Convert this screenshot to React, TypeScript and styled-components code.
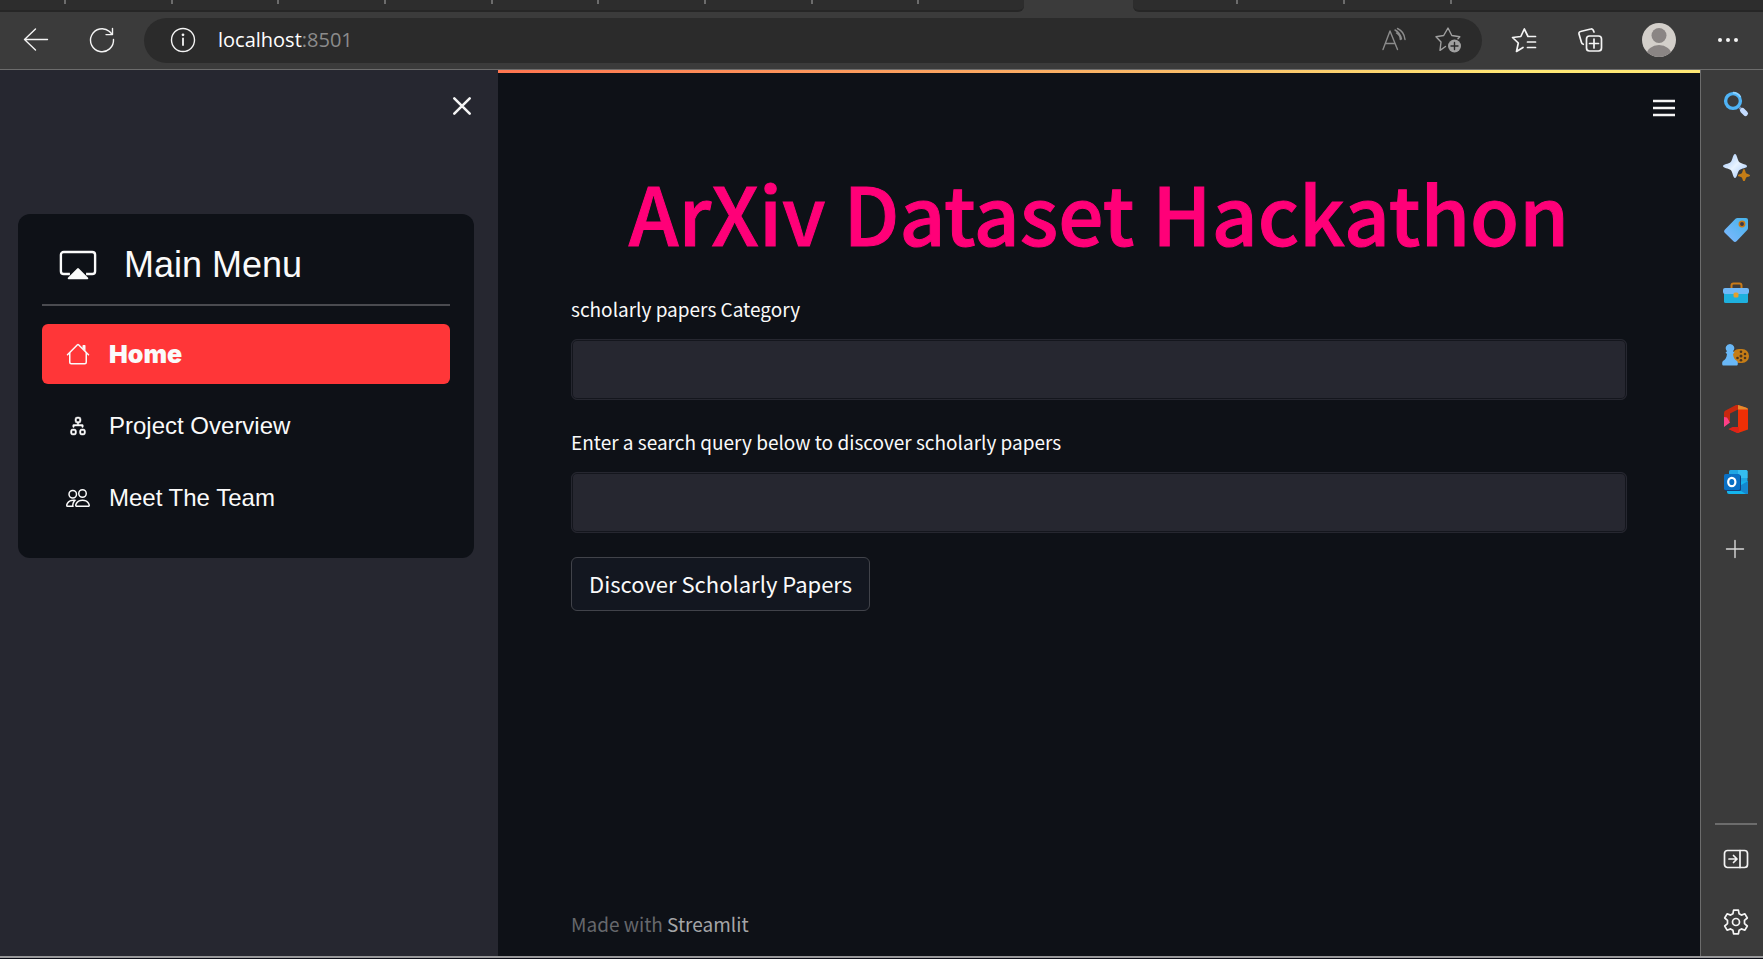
import React from "react";
import styled, { createGlobalStyle } from "styled-components";
import { BsDiagram2, BsPeople } from "react-icons/bs";

const source = `"Source Sans Pro", "Noto Sans CJK SC", sans-serif`;

const Global = createGlobalStyle`
  *, *::before, *::after { box-sizing: border-box; }
  body { margin: 0; background: #0e1117; color: #fafafa; font-family: ${source}; }
  button { font: inherit; color: inherit; border: 0; background: none; padding: 0; cursor: pointer; }
  svg { display: block; flex: none; }
`;

const Browser = styled.div`
  display: flex;
  flex-direction: column;
  min-height: 100vh;
  border-bottom: 1px solid #0a0c16;
`;

const TabStrip = styled.div`
  display: flex;
  height: 12px;
  background: #3b3b3b;
`;

const TabRun = styled.div<{ $grow: number; $side: "left" | "right" }>`
  flex: ${(p) => p.$grow} 1 0;
  display: flex;
  background: #2d2d2d;
  border-bottom: 2px solid #262626;
  border-bottom-${(p) => (p.$side === "left" ? "right" : "left")}-radius: 6px;
`;

const Tab = styled.div<{ $grow?: number; $last?: boolean }>`
  flex: ${(p) => p.$grow ?? 106} 1 0;
  height: 4px;
  border-right: ${(p) => (p.$last ? "0" : "2px solid #6c6c6c")};
`;

const ActiveTab = styled.div`
  flex: 109 1 0;
`;

const Toolbar = styled.header`
  display: flex;
  align-items: center;
  height: 58px;
  padding: 0 21px 1px 22px;
  gap: 28px;
  background: #3b3b3b;
  border-bottom: 1px solid #6c6c6c;
`;

const ToolGroup = styled.div`
  display: flex;
  align-items: center;
  gap: 38px;
`;

const ToolButton = styled.button`
  display: block;
`;

const AddressBar = styled.div`
  flex: 1;
  display: flex;
  align-items: center;
  height: 45px;
  padding: 0 19px 0 25px;
  gap: 21px;
  border-radius: 24px;
  background: #2b2b2b;
`;

const AddressActions = styled.div`
  display: flex;
  gap: 26px;
`;

const Url = styled.a`
  flex: 1;
  font-family: "Segoe UI", "Open Sans", sans-serif;
  font-size: 20px;
  line-height: 28px;
  color: #ffffff;
  text-decoration: none;
`;

const Port = styled.span`
  color: #8b8b8b;
`;

const Body = styled.div`
  flex: 1;
  display: flex;
  border-bottom: 2px solid #98989a;
`;

const Sidebar = styled.aside`
  flex: 0 0 498px;
  background: #262730;
  display: flex;
  flex-direction: column;
  padding: 24px 24px 24px 18px;
`;

const CloseButton = styled.button`
  align-self: flex-end;
`;

const Menu = styled.nav`
  margin-top: 96px;
  padding: 24px 24px 30px;
  border-radius: 12px;
  background: #0e1117;
  font-family: "Liberation Sans", Arial, sans-serif;
`;

const MenuTitle = styled.div`
  display: flex;
  align-items: center;
  gap: 27px;
  padding: 0 17px;
  height: 54px;
  font-size: 36px;
`;

const Rule = styled.hr`
  margin: 12px 0 18px;
  border: 0;
  height: 2px;
  background: #4a4b50;
`;

const MenuList = styled.ul`
  list-style: none;
  margin: 0;
  padding: 0;
  display: flex;
  flex-direction: column;
  gap: 12px;
`;

const MenuLink = styled.a<{ $active?: boolean }>`
  display: flex;
  align-items: center;
  gap: 19px;
  height: 60px;
  padding: 0 24px;
  border-radius: 6px;
  font-size: ${(p) => (p.$active ? 25 : 24)}px;
  font-family: ${(p) => (p.$active ? `"Arial Black", Inter, sans-serif` : "inherit")};
  font-weight: ${(p) => (p.$active ? 900 : 400)};
  color: #fafafa;
  background: ${(p) => (p.$active ? "#ff3638" : "transparent")};
  text-decoration: none;
`;

const Content = styled.main`
  flex: 1;
  display: flex;
  flex-direction: column;
  background: #0e1117;
`;

const Decoration = styled.div`
  height: 3px;
  background: linear-gradient(90deg, #ff7550, #f9c06a 60%, #ffe875 85%);
`;

const PageHeader = styled.div`
  display: flex;
  justify-content: flex-end;
  padding: 21px 22px 0;
`;

const Page = styled.div`
  flex: 1;
  display: flex;
  flex-direction: column;
  padding: 41px 73px 17px;
`;

const Title = styled.h1`
  margin: 0 0 36px;
  text-align: center;
  font-size: 80px;
  line-height: 96px;
  font-weight: 500;
  color: #ff0078;
  -webkit-text-stroke: 1px #ff0078;
`;

const Label = styled.label`
  font-size: 19px;
  line-height: 28px;
  margin-bottom: 16px;
`;

const Field = styled.input`
  width: 100%;
  height: 61px;
  margin-bottom: 28px;
  padding: 12px 16px;
  font: 22px/28px ${source};
  color: #fafafa;
  background: #262730;
  border: 1px solid #262730;
  border-radius: 6px;
  box-shadow: inset 0 0 0 1px #14161d;
  outline: 0;
`;

const SubmitButton = styled.button`
  align-self: flex-start;
  height: 54px;
  margin-top: -4px;
  padding: 0 17px 2px;
  font-size: 22px;
  border: 1px solid #41434a;
  border-radius: 6px;
  background: #131720;
`;

const Footer = styled.footer`
  margin-top: auto;
  font-size: 19px;
  line-height: 30px;
  color: #66686c;
`;

const FooterLink = styled.a`
  color: #a4a5a7;
  text-decoration: none;
`;

const EdgeBar = styled.aside`
  flex: 0 0 63px;
  display: flex;
  flex-direction: column;
  align-items: center;
  gap: 35px;
  padding: 20px 0 20px 8px;
  background: #3b3b3b;
  border-left: 1px solid #6c6c6c;
`;

const EdgeButton = styled.button`
  width: 28px;
  height: 28px;
`;

const EdgeDivider = styled.div`
  width: 42px;
  height: 2px;
  margin: auto 0 -15px;
  background: #6c6c6c;
`;

type LineProps = { size?: number; children: React.ReactNode; color?: string; w?: number };

const Line = ({ size = 28, children, color = "#f4f4f4", w = 1.4 }: LineProps) => (
  <svg width={size} height={size} viewBox="0 0 28 28" fill="none" stroke={color} strokeWidth={w} strokeLinecap="round" strokeLinejoin="round" aria-hidden="true">
    {children}
  </svg>
);

const AirplayIcon = () => (
  <svg width="38" height="38" viewBox="0 0 16 16" fill="none" aria-hidden="true">
    <path d="M4.600 11.800H2a1.200 1.200 0 0 1-1.200-1.200V3.700A1.200 1.200 0 0 1 2 2.500h12a1.200 1.200 0 0 1 1.200 1.200v6.900a1.200 1.200 0 0 1-1.200 1.200h-2.600" stroke="currentColor" strokeWidth="1" />
    <path d="M7.650 9.450a.5.5 0 0 1 .7 0l3.900 3.900a.35.350 0 0 1-.25.6H4a.35.350 0 0 1-.25-.6z" fill="currentColor" />
  </svg>
);

const HouseIcon = () => (
  <svg width="24" height="24" viewBox="0 0 16 16" fill="currentColor" aria-hidden="true">
    <path fillRule="evenodd" d="M2 13.500V7h1v6.500a.5.500 0 0 0 .5.500h9a.5.500 0 0 0 .5-.5V7h1v6.500a1.500 1.500 0 0 1-1.500 1.500h-9A1.500 1.500 0 0 1 2 13.500zm11-11V6l-2-2V2.500a.5.500 0 0 1 .5-.5h1a.5.500 0 0 1 .5.500z" />
    <path fillRule="evenodd" d="M7.293 1.500a1 1 0 0 1 1.414 0l6.647 6.646a.5.500 0 0 1-.708.708L8 2.207 1.354 8.854a.5.500 0 1 1-.708-.708L7.293 1.500z" />
  </svg>
);

const edgeItems = [
  {
    label: "Search",
    art: (
      <>
        <path d="M17.500 17.500l3 3" stroke="#7c8fb0" strokeWidth="2.500" />
        <path d="M20.500 20.500l3 3" stroke="#c4dcff" strokeWidth="5" strokeLinecap="round" />
        <circle cx="11" cy="11" r="7.400" fill="none" stroke="#4fb3f5" strokeWidth="3.400" />
        <path d="M11 2.600a8.400 8.400 0 0 1 7.500 4.600" fill="none" stroke="#8fd2ff" strokeWidth="1.600" />
      </>
    ),
  },
  {
    label: "Discover",
    art: (
      <>
        <path d="M13 1C15 1 15.500 7.500 17.500 9.300C19.500 11 25 11.300 25 13.300C25 15.300 19.500 15.300 17.500 17C15.500 18.800 15 25 13 25C11 25 10.700 18.800 8.700 17C6.700 15.300 1 15.300 1 13C1 11.300 6.700 11 8.700 9C10.500 7.200 11 1 13 1Z" fill="url(#spark)" />
        <path d="M22 16c1.200 0 1.400 3.500 2.200 4.300s3.800 1 3.800 2.200-3 1.200-3.800 2-1 4-2.200 4-1.400-3.200-2.200-4-3.800-.8-3.800-2 3-1.400 3.800-2.200 1-4.300 2.200-4.300z" fill="#c67d16" />
      </>
    ),
  },
  {
    label: "Shopping",
    art: (
      <>
        <path d="M15.500 2H24a2 2 0 0 1 2 2v8a3 3 0 0 1-1 2.300L14.800 25a2.500 2.500 0 0 1-3.600 0L3 17a2.500 2.500 0 0 1 0-3.600L13.500 2.800a3 3 0 0 1 2-.8z" fill="url(#tag)" />
        <circle cx="20" cy="8" r="2.700" fill="#3a3a48" stroke="#c87a18" strokeWidth="1.500" />
      </>
    ),
  },
  {
    label: "Tools",
    art: (
      <>
        <path d="M9.500 9V6.500a2 2 0 0 1 2-2h6a2 2 0 0 1 2 2V9" fill="none" stroke="#c87a18" strokeWidth="2" />
        <rect x="2" y="13" width="24" height="11" rx="1.500" fill="#1eb0de" />
        <path d="M3 9h22a2 2 0 0 1 2 2v2a2 2 0 0 1-2 2H3a2 2 0 0 1-2-2v-2a2 2 0 0 1 2-2z" fill="#6fb8f8" />
        <rect x="11.500" y="13.500" width="5" height="5" rx="1.500" fill="#e3a02f" />
      </>
    ),
  },
  {
    label: "Games",
    art: (
      <>
        <rect x="10" y="7" width="17" height="14" rx="7" fill="#c67d16" />
        <circle cx="19" cy="14" r="1.500" fill="#4a3520" />
        <circle cx="19" cy="9.800" r="1.300" fill="#4a3520" />
        <circle cx="19" cy="18.200" r="1.300" fill="#4a3520" />
        <circle cx="23" cy="12" r="1.300" fill="#4a3520" />
        <circle cx="23" cy="16" r="1.300" fill="#4a3520" />
        <circle cx="15.500" cy="16" r="1.300" fill="#4a3520" />
        <path d="M8 2a4.200 4.200 0 0 1 3 7.200l1.500 1.300-1.500 1.500c.3 3.500 1.500 5.500 4 7 1.200 1 1 4.500 0 4.500H1c-1 0-1.200-3.500 0-4.500 2.500-1.500 3.700-3.500 4-7L3.500 10.500 5 9.200A4.200 4.200 0 0 1 8 2z" fill="#69b7f6" />
      </>
    ),
  },
  {
    label: "Office",
    art: (
      <>
        <path d="M16 0l10 3.500v21L16 28 6.500 24 16 24.500z" fill="#ee2f06" />
        <path d="M14 0l3 0v4L8 8.500v7.500l-6 4V8a3 3 0 0 1 2-2.800z" fill="#c9280e" />
        <path d="M2 12l3 .5 3 5L2 22z" fill="#ff3f86" />
        <path d="M16 0l8 2.600a3 3 0 0 1 2 2H16z" fill="#e58a2c" />
        <path d="M6.500 24l4-2H17v6h-2z" fill="#de2318" />
      </>
    ),
  },
  {
    label: "Outlook",
    art: (
      <>
        <rect x="7" y="2" width="18.500" height="16" rx="1.500" fill="#1fa6e4" />
        <path d="M16 2h8a1.500 1.500 0 0 1 1.500 1.500V10H16z" fill="#35bdf0" />
        <path d="M5 15l21-2v11a2 2 0 0 1-2 2H7a2 2 0 0 1-2-2z" fill="#14b5ee" />
        <path d="M26 13L14 20l10 6h2z" fill="#1487cf" />
        <rect x="3" y="7" width="16" height="16" rx="1.500" fill="#14407c" />
        <rect x="2" y="6" width="16" height="16" rx="1.500" fill="#0a70c4" />
        <ellipse cx="9.800" cy="14" rx="3.600" ry="4.200" fill="none" stroke="#fff" strokeWidth="2.200" />
      </>
    ),
  },
];

export default function App() {
  return (
    <Browser>
      <Global />
      <TabStrip>
        <TabRun $grow={1024} $side="left">
          <Tab $grow={65} />
          {Array.from({ length: 8 }, (_, i) => <Tab key={i} />)}
          <Tab $last />
        </TabRun>
        <ActiveTab />
        <TabRun $grow={630} $side="right">
          <Tab $grow={104} /><Tab /><Tab /><Tab $grow={314} $last />
        </TabRun>
      </TabStrip>
      <Toolbar>
        <ToolGroup>
          <ToolButton aria-label="Back">
            <Line><path d="M25.500 13.500H2.500M13.500 3L2.500 13.500l11 10.500" /></Line>
          </ToolButton>
          <ToolButton aria-label="Refresh">
            <Line><path d="M25.500 13.500A11.500 11.500 0 1 1 21.500 5.500l2.800 3M24.500 2.500V8.600h-6.500" /></Line>
          </ToolButton>
        </ToolGroup>
        <AddressBar>
          <Line>
            <circle cx="14" cy="14" r="11.500" />
            <path d="M14 12.500v6.500" strokeWidth="1.800" />
            <circle cx="14" cy="8.800" r=".7" />
          </Line>
          <Url href="http://localhost:8501">localhost<Port>:8501</Port></Url>
          <AddressActions>
            <ToolButton aria-label="Read aloud">
              <Line color="#8c8c8c">
                <path d="M2 23.500L9 5l7.500 18.500M4.500 17.500h9.500M15.500 7c2.500 1.500 3.800 4 3.800 6.500M14 4c4 2 5.500 5 6.500 9" />
                <path d="M16.500 2.500c4.500 2 7 6 7.500 11" />
              </Line>
            </ToolButton>
            <ToolButton aria-label="Add to favorites">
              <Line color="#a0a0a0">
                <path d="M10.500 20.500l-5.500 3.800 1-8.300-5-5.200 7.700-1.300L13 2l3.800 7.500 8 1.300-1.800 2" />
                <circle cx="19.500" cy="20" r="6.500" fill="#a0a0a0" stroke="none" />
                <path d="M19.500 16.500v7M16 20h7" stroke="#2b2b2b" />
              </Line>
            </ToolButton>
          </AddressActions>
        </AddressBar>
        <ToolGroup>
          <ToolButton aria-label="Favorites">
            <Line w={1.7}>
              <path d="M25.500 10.500h-7.500L14.300 3l-3.500 7.500-8.300 1 5.800 5.500-1.800 8.500 6.500-4M17.500 16h8M17.500 21.500h8" />
            </Line>
          </ToolButton>
          <ToolButton aria-label="Collections">
            <Line w={1.7}>
              <rect x="10.500" y="10" width="15" height="15" rx="3" />
              <path d="M18 13v9M13.500 17.500h9M18 6l-.7-1.600A2 2 0 0 0 14.800 3L4.500 5.500A2 2 0 0 0 3 8l2.500 8.500a2.500 2.500 0 0 0 1.800 1.800" />
            </Line>
          </ToolButton>
          <ToolButton aria-label="Profile">
            <svg width="34" height="34" viewBox="0 0 34 34" aria-hidden="true">
              <clipPath id="avatar"><circle cx="17" cy="17" r="17" /></clipPath>
              <g clipPath="url(#avatar)">
                <path d="M0 0h34v34H0z" fill="#d3cfca" />
                <circle cx="17" cy="12.500" r="7.500" fill="#8a8584" />
                <ellipse cx="17" cy="32" rx="12.500" ry="10" fill="#8a8584" />
              </g>
            </svg>
          </ToolButton>
          <ToolButton aria-label="Settings and more">
            <Line><g fill="#f4f4f4" stroke="none"><circle cx="6" cy="14" r="2" /><circle cx="14" cy="14" r="2" /><circle cx="22" cy="14" r="2" /></g></Line>
          </ToolButton>
        </ToolGroup>
      </Toolbar>
      <Body>
        <Sidebar>
          <CloseButton aria-label="Close sidebar">
            <Line size={24}><path d="M5 5l18 18M23 5L5 23" strokeWidth="3" /></Line>
          </CloseButton>
          <Menu>
            <MenuTitle><AirplayIcon />Main Menu</MenuTitle>
            <Rule />
            <MenuList>
              <li><MenuLink href="#home" $active><HouseIcon />Home</MenuLink></li>
              <li><MenuLink href="#overview"><BsDiagram2 strokeWidth=".3" stroke="currentColor" />Project Overview</MenuLink></li>
              <li><MenuLink href="#team"><BsPeople />Meet The Team</MenuLink></li>
            </MenuList>
          </Menu>
        </Sidebar>
        <Content>
          <Decoration />
          <PageHeader>
            <ToolButton aria-label="Main menu">
              <Line><path d="M3 7h22M3 14h22M3 21h22" strokeWidth="2.500" strokeLinecap="butt" /></Line>
            </ToolButton>
          </PageHeader>
          <Page>
            <Title>ArXiv Dataset Hackathon</Title>
            <Label htmlFor="category">scholarly papers Category</Label>
            <Field id="category" />
            <Label htmlFor="query">Enter a search query below to discover scholarly papers</Label>
            <Field id="query" />
            <SubmitButton>Discover Scholarly Papers</SubmitButton>
            <Footer>Made with <FooterLink href="#streamlit">Streamlit</FooterLink></Footer>
          </Page>
        </Content>
        <EdgeBar>
          {edgeItems.map((item) => (
            <EdgeButton key={item.label} aria-label={item.label}>
              <svg width="28" height="28" viewBox="0 0 28 28" aria-hidden="true">
                <defs>
                  <linearGradient id="spark" x1="0" x2="1" y1="0" y2="1"><stop offset="0" stopColor="#9cc4fa" /><stop offset=".5" stopColor="#e8f3ff" /><stop offset="1" stopColor="#9cc4fa" /></linearGradient>
                  <linearGradient id="tag" x1="1" x2="0" y1="0" y2="1"><stop offset="0" stopColor="#45b3ea" /><stop offset="1" stopColor="#80b8ff" /></linearGradient>
                </defs>
                {item.art}
              </svg>
            </EdgeButton>
          ))}
          <EdgeButton aria-label="Customize">
            <Line color="#d8d8d8"><path d="M13 9.500v17M4.500 18h17" /></Line>
          </EdgeButton>
          <EdgeDivider />
          <EdgeButton aria-label="Hide sidebar">
            <Line w={1.7}>
              <rect x="2.500" y="5.500" width="23" height="17" rx="3" />
              <path d="M18 5.500v17M7 14h8M11.500 10.500L15 14l-3.500 3.500" />
            </Line>
          </EdgeButton>
          <EdgeButton aria-label="Settings">
            <Line w={1.7}>
              <circle cx="14" cy="14" r="3.500" />
              <path d="M11.600 2.200h4.800l.7 3.600 2.300 1.300 3.500-1.300 2.400 4.200-2.800 2.400v3.200l2.800 2.400-2.400 4.200-3.500-1.300-2.300 1.300-.7 3.600h-4.800l-.7-3.600-2.300-1.300-3.500 1.300L2.700 18l2.800-2.400v-3.200L2.700 10l2.400-4.200 3.500 1.300 2.300-1.300z" />
            </Line>
          </EdgeButton>
        </EdgeBar>
      </Body>
    </Browser>
  );
}
